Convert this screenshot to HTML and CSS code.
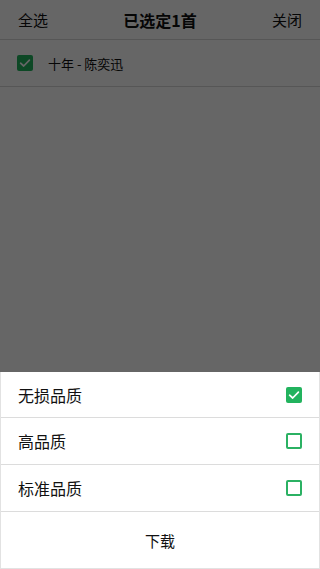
FILE: index.html
```html
<!DOCTYPE html>
<html lang="zh">
<head>
<meta charset="utf-8">
<link rel="stylesheet" href="styles.css">
</head>
<body>
<div class="page">
  <header class="topbar">
    <span class="tb-left">全选</span>
    <span class="tb-title">已选定1首</span>
    <span class="tb-right">关闭</span>
  </header>
  <div class="song">
    <span class="cb cb-on"><svg viewBox="0 0 16 16" width="16" height="16"><path d="M3.6 8.2 L6.7 11 L12.4 5.2" fill="none" stroke="#fff" stroke-width="1.7" stroke-linecap="round" stroke-linejoin="round"/></svg></span>
    <span class="song-name">十年 - 陈奕迅</span>
  </div>
</div>
<div class="overlay"></div>
<div class="sheet">
  <div class="opt">
    <span class="opt-label">无损品质</span>
    <span class="cb cb-on"><svg viewBox="0 0 16 16" width="16" height="16"><path d="M3.6 8.2 L6.7 11 L12.4 5.2" fill="none" stroke="#fff" stroke-width="1.7" stroke-linecap="round" stroke-linejoin="round"/></svg></span>
  </div>
  <div class="opt">
    <span class="opt-label">高品质</span>
    <span class="cb cb-off"></span>
  </div>
  <div class="opt">
    <span class="opt-label">标准品质</span>
    <span class="cb cb-off"></span>
  </div>
  <div class="download">下载</div>
</div>
</body>
</html>
```
FILE: styles.css
```css
html, body {
  margin: 0;
  padding: 0;
  height: 100%;
  background: #fff;
  font-family: "Noto Sans CJK SC", "Noto Sans", sans-serif;
  color: #111;
}
.page {
  width: 320px;
}
.topbar {
  height: 40px;
  display: flex;
  align-items: center;
  justify-content: space-between;
  padding: 0 18px;
  border-bottom: 1px solid #d8d8d8;
  box-sizing: border-box;
  font-size: 15px;
}
.tb-title {
  font-weight: bold;
  font-size: 16px;
}
.song {
  height: 47px;
  display: flex;
  align-items: center;
  padding-left: 17px;
  border-bottom: 1px solid #d8d8d8;
  box-sizing: border-box;
  font-size: 13px;
}
.song-name {
  margin-left: 15px;
}
.cb {
  width: 16px;
  height: 16px;
  box-sizing: border-box;
  border-radius: 2px;
  display: flex;
  flex-shrink: 0;
}
.cb-on {
  background: #22b35e;
}
.cb-off {
  border: 2px solid #2bb163;
  border-radius: 2px;
}
.overlay {
  position: fixed;
  inset: 0;
  background: rgba(0, 0, 0, 0.6);
}
.sheet {
  position: fixed;
  left: 0;
  right: 0;
  bottom: 0;
  height: 197px;
  background: #fff;
  border: 1px solid #e2e2e2;
  border-top: none;
  box-sizing: border-box;
  display: flex;
  flex-direction: column;
}
.opt {
  height: 47px;
  flex-shrink: 0;
  display: flex;
  align-items: center;
  justify-content: space-between;
  padding: 0 17px 0 17px;
  border-bottom: 1px solid #dcdcdc;
  box-sizing: border-box;
  font-size: 16px;
}
.opt:first-child {
  height: 46px;
}
.download {
  flex: 1;
  display: flex;
  align-items: center;
  justify-content: center;
  font-size: 15px;
}
```
